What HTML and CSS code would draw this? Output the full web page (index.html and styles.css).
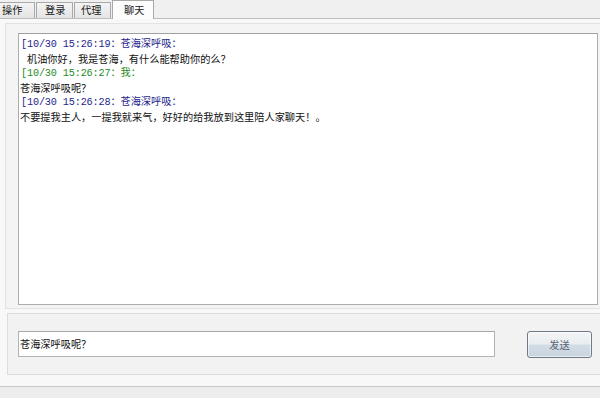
FILE: index.html
```html
<!DOCTYPE html>
<html>
<head>
    <title>聊天</title>
    <link rel="stylesheet" href="styles.css">
</head>
<body>

    <div class="tabs">
        <div class="tab tab-op">操作</div>
        <div class="tab tab-login">登录</div>
        <div class="tab tab-proxy">代理</div>
        <div class="tab tab-chat active">聊天</div>
    </div>

    <div class="page">
        <div class="chatPanel">
            <div class="chatLog">
                <div class="msgHead other"><span class="time">[10/30 15:26:19：</span><span class="name">苍海深呼吸：</span></div>
                <div class="msgBody indent">机油你好，我是苍海，有什么能帮助你的么？</div>
                <div class="msgHead self"><span class="time">[10/30 15:26:27：</span><span class="name">我：</span></div>
                <div class="msgBody">苍海深呼吸呢？</div>
                <div class="msgHead other"><span class="time">[10/30 15:26:28：</span><span class="name">苍海深呼吸：</span></div>
                <div class="msgBody">不要提我主人，一提我就来气，好好的给我放到这里陪人家聊天！。</div>
            </div>
        </div>

        <div class="sendPanel">
            <div class="sendInput">苍海深呼吸呢？</div>
            <button class="sendButton">发送</button>
        </div>
    </div>

</body>
</html>
```

FILE: styles.css
```css
body {
    margin: 0;
    overflow: hidden;
    background-color: #ededed;
    font-family: "Noto Sans CJK SC", sans-serif;
    font-size: 10.2px;
    color: #111;
}

/* Tab strip */
.tabs {
    display: flex;
    align-items: flex-end;
    height: 18px;
    gap: 1px;
    background: #f0f0f0;
}
.tab {
    box-sizing: border-box;
    height: 16px;
    line-height: 14px;
    padding-left: 3px;
    border: 1px solid #a9a9a9;
    border-bottom: none;
    background: linear-gradient(#f4f4f4, #e4e4e4);
    color: #1a1a1a;
}
.tab-op { width: 35px; border-left: none; padding-left: 2px; }
.tab-login { width: 37px; padding-left: 8px; }
.tab-proxy { width: 37px; padding-left: 6px; }
.tab-chat { width: 42px; padding-left: 11px; }
.tab.active {
    height: 19px;
    line-height: 18px;
    margin-bottom: -1px;
    background: #fcfcfc;
    position: relative;
    z-index: 1;
}

/* Tab page */
.page {
    height: 369px;
    border-top: 1px solid #bdbdbd;
    border-bottom: 1px solid #c9c9c9;
    background: #f8f8f8;
    padding-top: 4px;
    box-sizing: border-box;
}

.chatPanel {
    margin-left: 5px;
    padding: 9px 2px 3px 12px;
    border: 1px solid #e2e2e2;
    border-right: none;
    background: #f4f4f4;
}
.chatLog {
    box-sizing: border-box;
    height: 272px;
    width: 580px;
    border: 1px solid #adadad;
    border-top-color: #a0a0a0;
    background: #fff;
    padding: 2px 0 0 1px;
    line-height: 13.6px;
}
.msgHead { white-space: pre; }
.msgHead .time {
    font-family: "Liberation Mono", "Noto Sans CJK SC", monospace;
    letter-spacing: -0.15px;
    padding-left: 1px;
}
.msgHead .name { margin-left: 0; }
.msgHead.other { color: #1e1e8c; }
.msgHead.self { color: #258a25; }
.msgBody.indent { padding-left: 7px; }

/* Send area */
.sendPanel {
    display: flex;
    align-items: flex-start;
    gap: 32px;
    height: 62px;
    box-sizing: border-box;
    margin: 4px 0 0 7px;
    padding: 17px 0 0 10px;
    border: 1px solid #dcdcdc;
    border-right: none;
    background: #f2f2f2;
}
.sendInput {
    box-sizing: border-box;
    width: 477px;
    height: 26px;
    line-height: 24px;
    padding-left: 1px;
    border: 1px solid #b4b4b4;
    border-top-color: #a8a8a8;
    background: #fff;
}
.sendButton {
    box-sizing: border-box;
    width: 65px;
    height: 27px;
    padding: 0;
    border: 1px solid #707a86;
    border-radius: 3px;
    background: linear-gradient(#f3f5f7 0%, #e9edf1 48%, #d3dce5 52%, #c9d4df 100%);
    box-shadow: inset 0 0 0 1px rgba(255, 255, 255, 0.6);
    font-family: "Noto Sans CJK SC", sans-serif;
    font-size: 10.2px;
    color: #5a6470;
}
```
